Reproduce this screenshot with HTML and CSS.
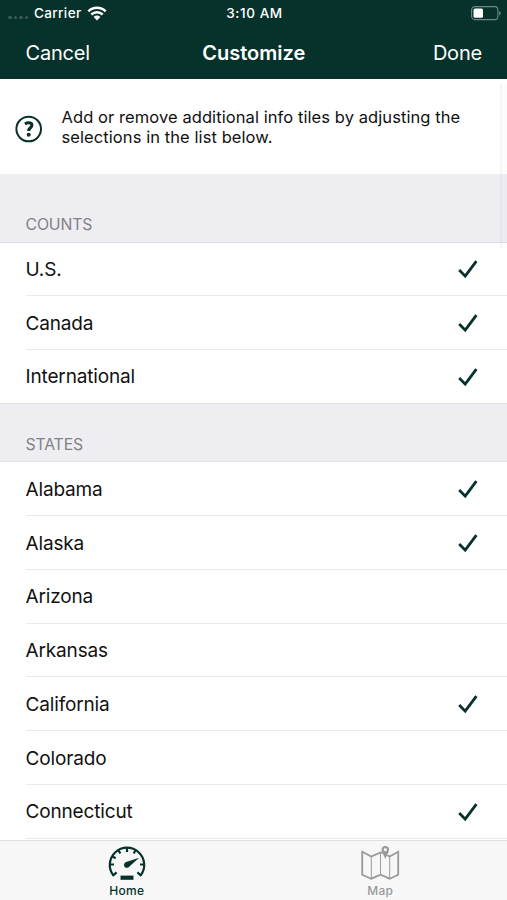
FILE: index.html
```html
<!DOCTYPE html>
<html lang="en">
<head>
<meta charset="utf-8">
<title>Customize</title>
<link rel="stylesheet" href="styles.css">
</head>
<body>
<svg class="defs" aria-hidden="true">
  <symbol id="check" viewBox="0 0 22 22"><path d="M2.2 12 8.2 18.2 19.4 3.2" fill="none" stroke="currentColor" stroke-width="2.8"/></symbol>
</svg>
<div class="screen">
  <header class="top">
    <div class="status">
      <div class="carrier">
        <span class="dots"><i></i><i></i><i></i><i></i></span>
        <span>Carrier</span>
        <svg class="wifi" viewBox="0 0 20 15"><path d="M1.3 5.3a12.5 12.5 0 0 1 17.4 0M4.3 8.5a8.2 8.2 0 0 1 11.4 0" fill="none" stroke="#fff" stroke-width="2.5"/><path d="M6.6 10.9a4.9 4.9 0 0 1 6.8 0L10 14.5z" fill="#fff"/></svg>
      </div>
      <span class="time">3:10 AM</span>
      <svg class="battery" viewBox="0 0 30 15"><rect x=".6" y=".6" width="26.3" height="13" rx="3.4" fill="none" stroke="#6e8983" stroke-width="1.1"/><path d="M28.2 5v4.4q1.5-.6 1.5-2.2T28.2 5" fill="#6e8983"/><rect x="2.5" y="2.4" width="9.5" height="9.4" rx="1.5" fill="#fff"/></svg>
    </div>
    <nav class="nav"><span class="cancel">Cancel</span><h1>Customize</h1><span class="done">Done</span></nav>
  </header>
  <main class="content">
    <section class="intro">
      <svg class="help" viewBox="0 0 28 28"><circle cx="13.7" cy="14" r="12.3" fill="none" stroke="currentColor" stroke-width="2"/><path d="M10 8.9q1.7-1.2 3.7-1.2c2.1 0 3.2 1 3.2 2.6 0 2.4-3.2 2.6-3.2 5.6" fill="none" stroke="currentColor" stroke-width="3.1"/><circle cx="13.7" cy="19.7" r="2" fill="currentColor"/></svg>
      <p>Add or remove additional info tiles by adjusting the<br>selections in the list below.</p>
    </section>
    <h2 class="first">COUNTS</h2>
    <ul class="counts">
      <li><span>U.S.</span><svg><use href="#check"/></svg></li>
      <li><span>Canada</span><svg><use href="#check"/></svg></li>
      <li><span>International</span><svg><use href="#check"/></svg></li>
    </ul>
    <h2>STATES</h2>
    <ul class="states">
      <li><span>Alabama</span><svg><use href="#check"/></svg></li>
      <li><span>Alaska</span><svg><use href="#check"/></svg></li>
      <li><span>Arizona</span></li>
      <li><span>Arkansas</span></li>
      <li><span>California</span><svg><use href="#check"/></svg></li>
      <li><span>Colorado</span></li>
      <li><span>Connecticut</span><svg><use href="#check"/></svg></li>
      <li></li>
    </ul>
    <div class="scrollbar"></div>
  </main>
  <footer class="tabs">
    <div class="tab active">
      <svg viewBox="0 0 40 36"><g fill="none" stroke="currentColor" stroke-width="2.2"><path d="M6.3 30.3A17.2 17.2 0 1 1 33.7 30.3"/><path d="M5.6 30.8 9.6 27.4M34.4 30.8 30.4 27.4M2.8 19.5H7M37.2 19.5H33M4.8 11.2 8.7 13.3M11.2 4.8 13.3 8.5M20 2.5V7M28.8 4.8 26.7 8.5"/></g><path d="M19.2 17.1 32.2 12.8 22.4 21.4A2.9 2.9 0 1 1 19.2 17.1" fill="currentColor"/><path d="M13.5 30.6h13v4.2h-13z" fill="currentColor"/></svg>
      <span>Home</span>
    </div>
    <div class="tab">
      <svg viewBox="0 0 40 36"><g fill="none" stroke="currentColor"><path d="M22.6 8.2 20.5 7.5 11.3 11.5 2.2 6.7V29.7L11.3 33.7 20.5 29.7 29.7 33.7 38.2 29.7V6.7L29.7 11.5 27.4 10.4" stroke-width="1.8"/><path d="M11.3 11.5V33.5M20.5 7.7V29.7M29.7 11.5V33.5" stroke-width="1"/></g><path d="M25.3 14C24.2 10.4 21.6 8 21.6 4.8a3.7 3.7 0 0 1 7.4 0C29 8 26.4 10.4 25.3 14zM25.3 3.1a1.6 1.6 0 1 0 0 3.2 1.6 1.6 0 0 0 0-3.2" fill="currentColor" fill-rule="evenodd"/></svg>
      <span>Map</span>
    </div>
  </footer>
</div>
</body>
</html>
```
FILE: styles.css
```css
* { box-sizing: border-box; }
body { margin: 0; font-family: Inter, "Liberation Sans", sans-serif; color: #111; background: #fff; }
.defs { position: absolute; width: 0; height: 0; }
.screen { width: 507px; height: 900px; display: flex; flex-direction: column; overflow: hidden; }
.top { height: 79px; flex: none; background: #06322b; color: #fff; }
.status { height: 26px; display: grid; grid-template-columns: 1fr auto 1fr; align-items: center; padding: 0 6px 0 8px; font-size: 13.5px; font-weight: 500; letter-spacing: .4px; }
.time { letter-spacing: .6px; }
.carrier { display: flex; align-items: center; }
.dots { display: flex; gap: 2px; margin: 9px 5.5px 0 0; }
.dots i { width: 3.6px; height: 3.6px; border-radius: 50%; background: #3b5c56; }
.wifi { width: 20px; height: 15px; margin-left: 5.5px; }
.battery { width: 30px; height: 15px; justify-self: end; }
.nav { height: 53px; display: grid; grid-template-columns: 1fr auto 1fr; align-items: center; padding: 0 25px 0 25.5px; font-size: 20px; letter-spacing: -.2px; }
.nav h1 { margin: 0; font-size: 20px; font-weight: 600; letter-spacing: 0; }
.done { justify-self: end; }
.content { flex: 1; min-height: 0; overflow: hidden; position: relative; }
.intro { height: 95px; display: flex; padding: 28px 0 0 15px; }
.help { width: 28px; height: 28px; margin-top: 8px; color: #06322b; }
.intro p { margin: 0 0 0 18.5px; font-size: 16.5px; line-height: 20px; letter-spacing: .08px; white-space: nowrap; }
h2 { margin: 0; height: 59.5px; padding: 31px 0 0 25.5px; background: #eeedf2; border-top: 1px solid #e3e3e7; border-bottom: 1px solid #e3e3e7; font-size: 15.8px; line-height: 20px; font-weight: 400; letter-spacing: -.15px; color: #818186; }
h2.first { height: 68.5px; padding-top: 40px; border-top-color: #eeedf2; }
ul { list-style: none; margin: 0; padding: 0; }
li { height: 53.75px; margin-left: 25.5px; padding: 1px 28px 0 0; display: flex; align-items: center; justify-content: space-between; border-bottom: 1px solid #e9e9eb; font-size: 19px; letter-spacing: -.15px; }
li svg { width: 22px; height: 22px; color: #06322b; }
.counts li:last-child { height: 52.75px; border-bottom: 0; }
.states li { padding-top: 1.5px; }
.scrollbar { position: absolute; top: 5px; right: 0; width: 7px; height: 164px; background: rgba(60, 60, 90, .015); border-left: 2px solid rgba(60, 60, 90, .03); }
.tabs { height: 60px; flex: none; display: grid; grid-template-columns: 1fr 1fr; background: #f7f7f7; border-top: 1px solid #dfdfdf; }
.tab { display: flex; flex-direction: column; align-items: center; padding-top: 4px; color: #999; font-size: 12px; font-weight: 500; line-height: 15px; letter-spacing: .3px; }
.tab svg { width: 40px; height: 36px; margin-bottom: 2px; }
.tab.active { color: #06322b; }
```
